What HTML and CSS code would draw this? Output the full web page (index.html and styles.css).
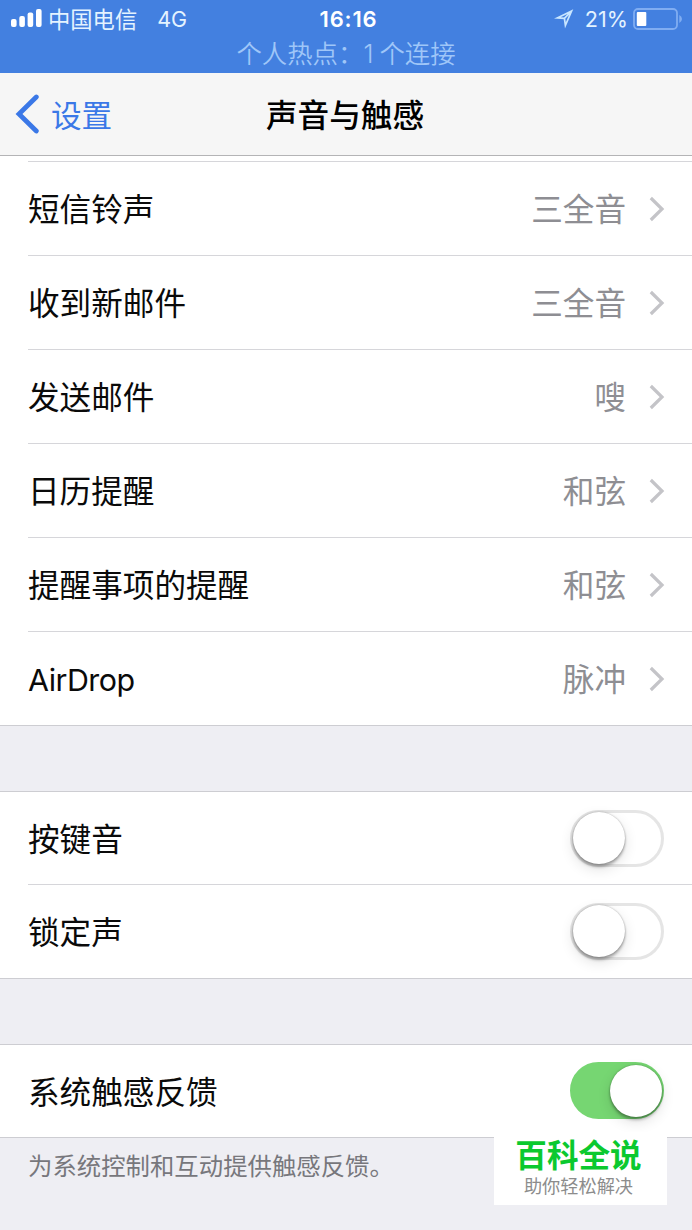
FILE: index.html
```html
<!DOCTYPE html>
<html lang="zh-CN">
  <head>
    <meta charset="UTF-8" />
    <meta name="viewport" content="width=device-width, initial-scale=1.0" />
    <title>声音与触感</title>
    <link rel="stylesheet" href="styles.css">
  </head>
  <body>
    <header class="status-bar">
      <div class="status-row">
        <div class="status-left">
          <svg class="signal" width="32" height="20" viewBox="0 0 32 20" fill="#fff">
            <rect x="0" y="10" width="5.6" height="8" rx="2" />
            <rect x="8.3" y="7" width="5.6" height="11" rx="2" />
            <rect x="16.6" y="3.5" width="5.6" height="14.5" rx="2" />
            <rect x="25" y="0" width="5.6" height="18" rx="2" />
          </svg>
          <span class="carrier">中国电信</span>
          <span class="network">4G</span>
        </div>
        <div class="time">16:16</div>
        <div class="status-right">
          <svg class="location" width="20" height="20" viewBox="0 0 20 20">
            <path d="M3.2 8.9 L17.6 2 L11.4 16.4 L10.4 9.4 Z M10.4 9.4 L17.6 2" fill="none" stroke="#c9e6ff" stroke-width="1.7" />
          </svg>
          <span class="percent">21%</span>
          <svg class="battery" width="50" height="22" viewBox="0 0 50 22">
            <rect x="1" y="1" width="43" height="20" rx="4" fill="none" stroke="#80adf2" stroke-width="1.8" />
            <rect x="3.8" y="4" width="9.5" height="14" rx="1" fill="#fff" />
            <path d="M46.3 7 Q49 8.5 49 11 Q49 13.5 46.3 15 Z" fill="#80adf2" />
          </svg>
        </div>
      </div>
      <div class="hotspot">个人热点：<span class="count">1</span>个连接</div>
    </header>

    <nav class="nav-bar">
      <a class="back">
        <svg width="24" height="40" viewBox="0 0 24 40">
          <path d="M21.3 3 L4 20 L21.3 37" fill="none" stroke="#3b78e7" stroke-width="4.8" stroke-linecap="round" stroke-linejoin="miter" />
        </svg>
        <span>设置</span>
      </a>
      <h1>声音与触感</h1>
    </nav>

    <main>
      <ul class="group sounds">
        <li class="row">
          <span class="label">短信铃声</span><span class="value">三全音</span>
          <svg class="chevron" viewBox="0 0 16 26"><path d="M1.8 2 L13 13 L1.8 24" /></svg>
        </li>
        <li class="row">
          <span class="label">收到新邮件</span><span class="value">三全音</span>
          <svg class="chevron" viewBox="0 0 16 26"><path d="M1.8 2 L13 13 L1.8 24" /></svg>
        </li>
        <li class="row">
          <span class="label">发送邮件</span><span class="value">嗖</span>
          <svg class="chevron" viewBox="0 0 16 26"><path d="M1.8 2 L13 13 L1.8 24" /></svg>
        </li>
        <li class="row">
          <span class="label">日历提醒</span><span class="value">和弦</span>
          <svg class="chevron" viewBox="0 0 16 26"><path d="M1.8 2 L13 13 L1.8 24" /></svg>
        </li>
        <li class="row">
          <span class="label">提醒事项的提醒</span><span class="value">和弦</span>
          <svg class="chevron" viewBox="0 0 16 26"><path d="M1.8 2 L13 13 L1.8 24" /></svg>
        </li>
        <li class="row">
          <span class="label latin">AirDrop</span><span class="value">脉冲</span>
          <svg class="chevron" viewBox="0 0 16 26"><path d="M1.8 2 L13 13 L1.8 24" /></svg>
        </li>
      </ul>

      <ul class="group switches">
        <li class="row short">
          <span class="label">按键音</span>
          <span class="toggle"><span class="knob"></span></span>
        </li>
        <li class="row">
          <span class="label">锁定声</span>
          <span class="toggle"><span class="knob"></span></span>
        </li>
      </ul>

      <ul class="group switches">
        <li class="row short">
          <span class="label">系统触感反馈</span>
          <span class="toggle on"><span class="knob"></span></span>
        </li>
      </ul>
      <p class="note">为系统控制和互动提供触感反馈。</p>
    </main>

    <div class="badge">
      <strong>百科全说</strong>
      <span>助你轻松解决</span>
    </div>
  </body>
</html>
```
FILE: styles.css
```css
* {
  box-sizing: border-box;
}
body {
  position: relative;
  width: 692px;
  height: 1230px;
  margin: 0;
  overflow: hidden;
  background-color: #eeeef3;
  color: #0a0a0a;
  font-family: Inter, 'Noto Sans CJK SC', sans-serif;
  font-size: 31.6px;
}
ul {
  list-style: none;
  margin: 0;
  padding: 0;
}
svg {
  display: block;
  flex: none;
}

/* status bar */
.status-bar {
  height: 73px;
  background-color: #4380e0;
  color: #e4f3ff;
}
.status-row {
  display: grid;
  grid-template-columns: 1fr auto 1fr;
  align-items: center;
  height: 38px;
  padding: 0 9px 0 11px;
  font-size: 21px;
}
.status-left,
.status-right {
  display: flex;
  align-items: center;
}
.status-right {
  justify-content: flex-end;
}
.carrier {
  margin-left: 5px;
  padding-bottom: 2px;
  font-size: 22.3px;
}
.network {
  margin-left: 20px;
  font-size: 21.5px;
}
.time {
  margin-left: 3px;
  color: #fff;
  font-weight: 600;
  font-size: 22px;
  letter-spacing: 0.8px;
}
.percent {
  margin: 0 5px 0 11px;
  font-size: 21.6px;
}
.hotspot {
  height: 35px;
  line-height: 32px;
  text-align: center;
  color: #9fc6f8;
  font-size: 25.4px;
  font-weight: 350;
}
.count {
  margin: 0 6px 0 0;
}

/* navigation bar */
.nav-bar {
  display: grid;
  grid-template-columns: 1fr auto 1fr;
  align-items: center;
  height: 83px;
  padding: 0 15px;
  background-color: #f6f6f6;
  border-bottom: 1px solid #b4b4b6;
}
.back {
  display: flex;
  align-items: center;
  color: #3b78e7;
  font-size: 30.6px;
}
.back span {
  margin-left: 12px;
  padding-bottom: 1px;
}
.nav-bar h1 {
  margin: 0;
  padding: 0 2px 3px 0;
  color: #000;
  font-size: 31.6px;
  font-weight: 500;
}

/* settings list */
.group {
  background-color: #fff;
  border-bottom: 1px solid #cdcdd2;
}
.sounds {
  padding-top: 5px;
}
.switches {
  margin-top: 65px;
  border-top: 1px solid #cdcdd2;
}
.row {
  display: flex;
  align-items: center;
  height: 94px;
  margin-left: 28px;
  padding-right: 28px;
  border-bottom: 1px solid #d6d6da;
}
.row:last-child {
  height: 93px;
  border-bottom: none;
}
.sounds .row:first-child {
  height: 95px;
  border-top: 1px solid #d6d6da;
}
.row.short {
  height: 93px;
}
.row.short:last-child {
  height: 92px;
}
.label {
  flex: 1;
}
.label,
.value {
  padding-bottom: 3px;
}
.label.latin {
  padding: 2px 0 0;
  font-size: 30.4px;
  letter-spacing: -0.5px;
}
.value {
  color: #8e8e93;
}
.chevron {
  width: 16px;
  height: 26px;
  margin: 1px -1px 0 23px;
  fill: none;
  stroke: #c4c4c8;
  stroke-width: 3.2;
}

/* switches */
.toggle {
  width: 94px;
  height: 57px;
  border: 3px solid #e5e5e5;
  border-radius: 29px;
}
.knob {
  display: block;
  width: 52px;
  height: 52px;
  margin-top: -1px;
  border-radius: 50%;
  background-color: #fff;
  box-shadow: 0 3px 3px rgba(0, 0, 0, 0.28), 0 0 2px rgba(0, 0, 0, 0.3),
    0 5px 14px rgba(0, 0, 0, 0.12);
}
.toggle.on {
  margin-bottom: 1px;
  background-color: #76d672;
  border-color: #76d672;
}
.on .knob {
  margin: 0 -1px 0 auto;
}
.note {
  margin: 0;
  padding: 10px 28px;
  color: #77777c;
  font-size: 24.4px;
  line-height: 36px;
}

/* site badge, lies over the page corner */
.badge {
  position: absolute;
  left: 494px;
  top: 1132px;
  display: flex;
  flex-direction: column;
  align-items: center;
  width: 173px;
  height: 73px;
  padding-right: 4px;
  background-color: #fff;
}
.badge strong {
  height: 42px;
  color: #0bc92f;
  font-size: 31.6px;
  font-weight: 700;
  line-height: 48px;
}
.badge span {
  color: #8c8c8c;
  font-size: 18.2px;
  line-height: 24px;
}
```
